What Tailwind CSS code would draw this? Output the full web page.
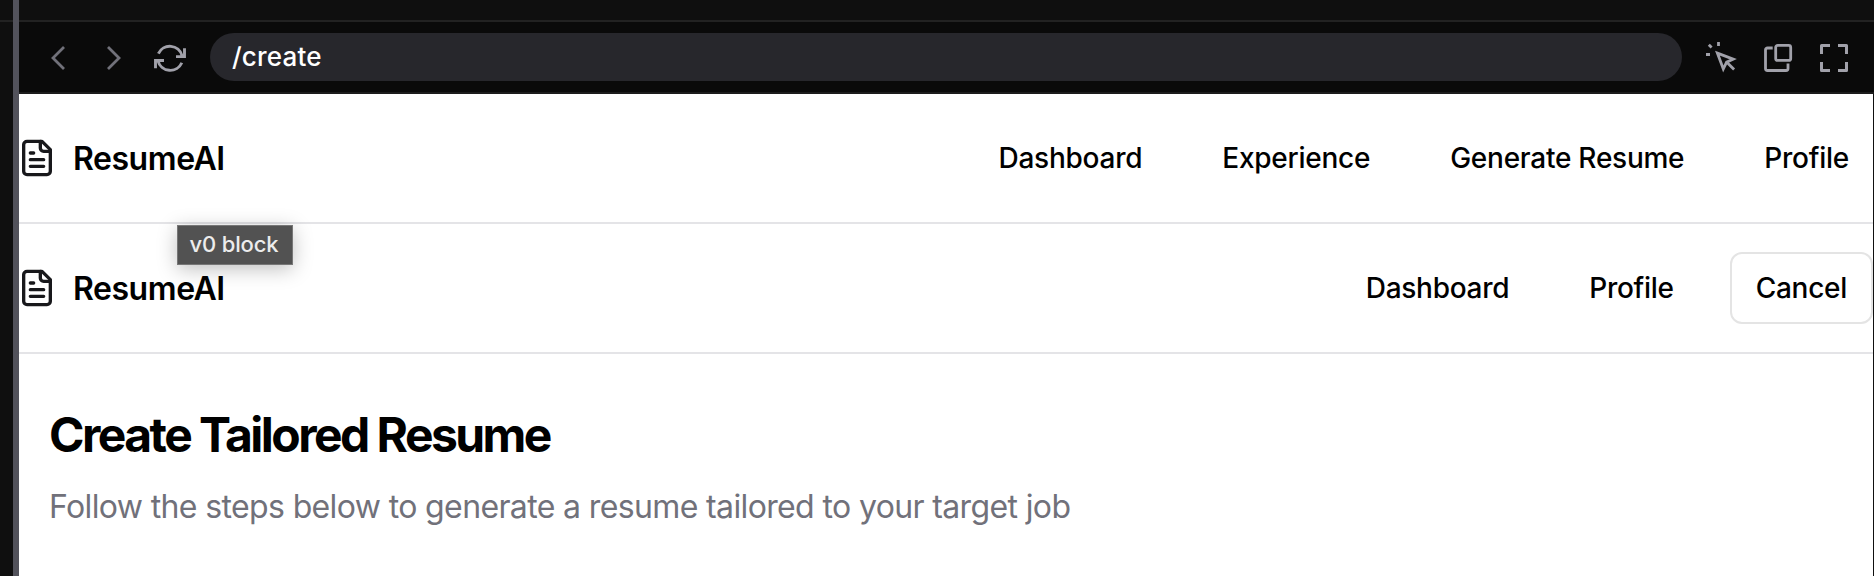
<!DOCTYPE html>
<html lang="en">
<head>
<meta charset="utf-8">
<title>Create Tailored Resume</title>
<script src="https://cdn.jsdelivr.net/npm/@tailwindcss/browser@4"></script>
</head>
<body class="h-[576px] w-[1874px] overflow-hidden bg-[#0f0f0f] font-['Inter',sans-serif]">
<div class="flex h-full">
  <aside class="w-[13px] shrink-0"><div class="h-[22px] border-b-2 border-[#222222]"></div></aside>
  <div class="w-1.5 shrink-0 bg-[#52525b]"></div>
  <div class="flex min-w-0 flex-1 flex-col">
    <div class="h-[22px] shrink-0 border-b-2 border-[#222222]"></div>
    <div class="flex h-[72px] shrink-0 items-center border-b-2 border-[#1c1c1c] bg-[#0a0a0a] pr-6 pl-[23px] text-[#a1a1aa]">
      <svg class="mt-0.5 size-8" viewBox="0 0 32 32" fill="none" stroke="#71717a" stroke-width="2.8"><path d="M22 5 11 16l11 11"/></svg>
      <svg class="mt-0.5 ml-6 size-8" viewBox="0 0 32 32" fill="none" stroke="#71717a" stroke-width="2.8"><path d="M10 5l11 11-11 11"/></svg>
      <svg class="mt-0.5 ml-6 size-8" viewBox="0 0 32 32" fill="none" stroke="currentColor" stroke-width="2.9"><path d="M4.4 11.6A12.6 12.6 0 0 1 28 13.6M30.5 6.3v8.3H22M27.8 20.7A12.6 12.6 0 0 1 4 18.8M1.5 26.3v-7.8H10"/></svg>
      <div class="ml-6 flex h-12 flex-1 items-center rounded-full bg-[#27272c] pb-0.5 pl-[22px] text-[26px] font-[450] tracking-[0.2px] text-white">/create</div>
      <svg class="mt-0.5 ml-6 size-8" viewBox="0 0 32 32" fill="none" stroke="currentColor" stroke-width="2.8"><path d="M11.4 11.1 27.2 17.2l-6.6 2.9-3.3 6.9zM20.8 20.3l7.3 7.3M12.5 0v4M0 12.5h4M2.8 2.8l2.8 2.8"/></svg>
      <svg class="mt-0.5 ml-6 size-8" viewBox="0 0 32 32" fill="none" stroke="currentColor" stroke-width="2.8"><rect x="13.7" y="3.4" width="15" height="15" rx="2"/><path d="M10.7 6H5.5a2 2 0 0 0-2 2v18.5a2 2 0 0 0 2 2H24a2 2 0 0 0 2-2v-5"/></svg>
      <svg class="mt-0.5 ml-6 size-8" viewBox="0 0 32 32" fill="none" stroke="currentColor" stroke-width="3" stroke-linejoin="round"><path d="M12 3.5H3.5V12M20 3.5h8.5V12M12 28.5H3.5V20M20 28.5h8.5V20"/></svg>
    </div>
    <div class="relative mr-px flex-1 bg-white text-black">
      <header class="flex h-[130px] items-center justify-between border-b-2 border-[#e4e4e7]">
        <div class="-ml-0.5 flex items-center gap-4">
          <svg class="size-10" viewBox="0 0 24 24" fill="none" stroke="#18181b" stroke-width="2" stroke-linecap="round" stroke-linejoin="round"><path d="M15 2H6a2 2 0 0 0-2 2v16a2 2 0 0 0 2 2h12a2 2 0 0 0 2-2V7Z"/><path d="M14 2v4a2 2 0 0 0 2 2h4M10 9H8M16 13H8M16 17H8"/></svg>
          <span class="pt-0.5 text-[32px] font-semibold tracking-[-0.45px]">ResumeAI</span>
        </div>
        <nav class="flex items-center gap-20 pr-6 text-[28px] font-medium tracking-[-0.25px]">
          <a>Dashboard</a><a>Experience</a><a>Generate Resume</a><a>Profile</a>
        </nav>
      </header>
      <header class="flex h-[130px] items-center justify-between border-b-2 border-[#e4e4e7]">
        <div class="-ml-0.5 flex items-center gap-4">
          <svg class="size-10" viewBox="0 0 24 24" fill="none" stroke="#18181b" stroke-width="2" stroke-linecap="round" stroke-linejoin="round"><path d="M15 2H6a2 2 0 0 0-2 2v16a2 2 0 0 0 2 2h12a2 2 0 0 0 2-2V7Z"/><path d="M14 2v4a2 2 0 0 0 2 2h4M10 9H8M16 13H8M16 17H8"/></svg>
          <span class="pt-0.5 text-[32px] font-semibold tracking-[-0.45px]">ResumeAI</span>
        </div>
        <nav class="flex items-center text-[28px] font-medium tracking-[-0.28px]">
          <a class="mr-20">Dashboard</a><a class="mr-14">Profile</a>
          <button class="h-[72px] rounded-xl border-2 border-[#e4e4e4] px-6">Cancel</button>
        </nav>
      </header>
      <main class="px-[30px] pt-[51px]">
        <h1 class="text-5xl leading-[60px] font-bold tracking-[-2.55px]">Create Tailored Resume</h1>
        <p class="mt-[18px] text-[32px] leading-[48px] tracking-[-0.63px] text-[#71717a]">Follow the steps below to generate a resume tailored to your target job</p>
      </main>
      <div class="absolute top-[131px] left-[158px] flex h-10 w-[116px] items-center justify-center border border-[#777777] bg-[#525252] pr-0.5 pb-0.5 text-[22px] font-medium tracking-[-0.15px] text-[#ececec] shadow-[0_4px_20px_rgba(0,0,0,0.25)]">v0 block</div>
    </div>
  </div>
</div>
</body>
</html>
